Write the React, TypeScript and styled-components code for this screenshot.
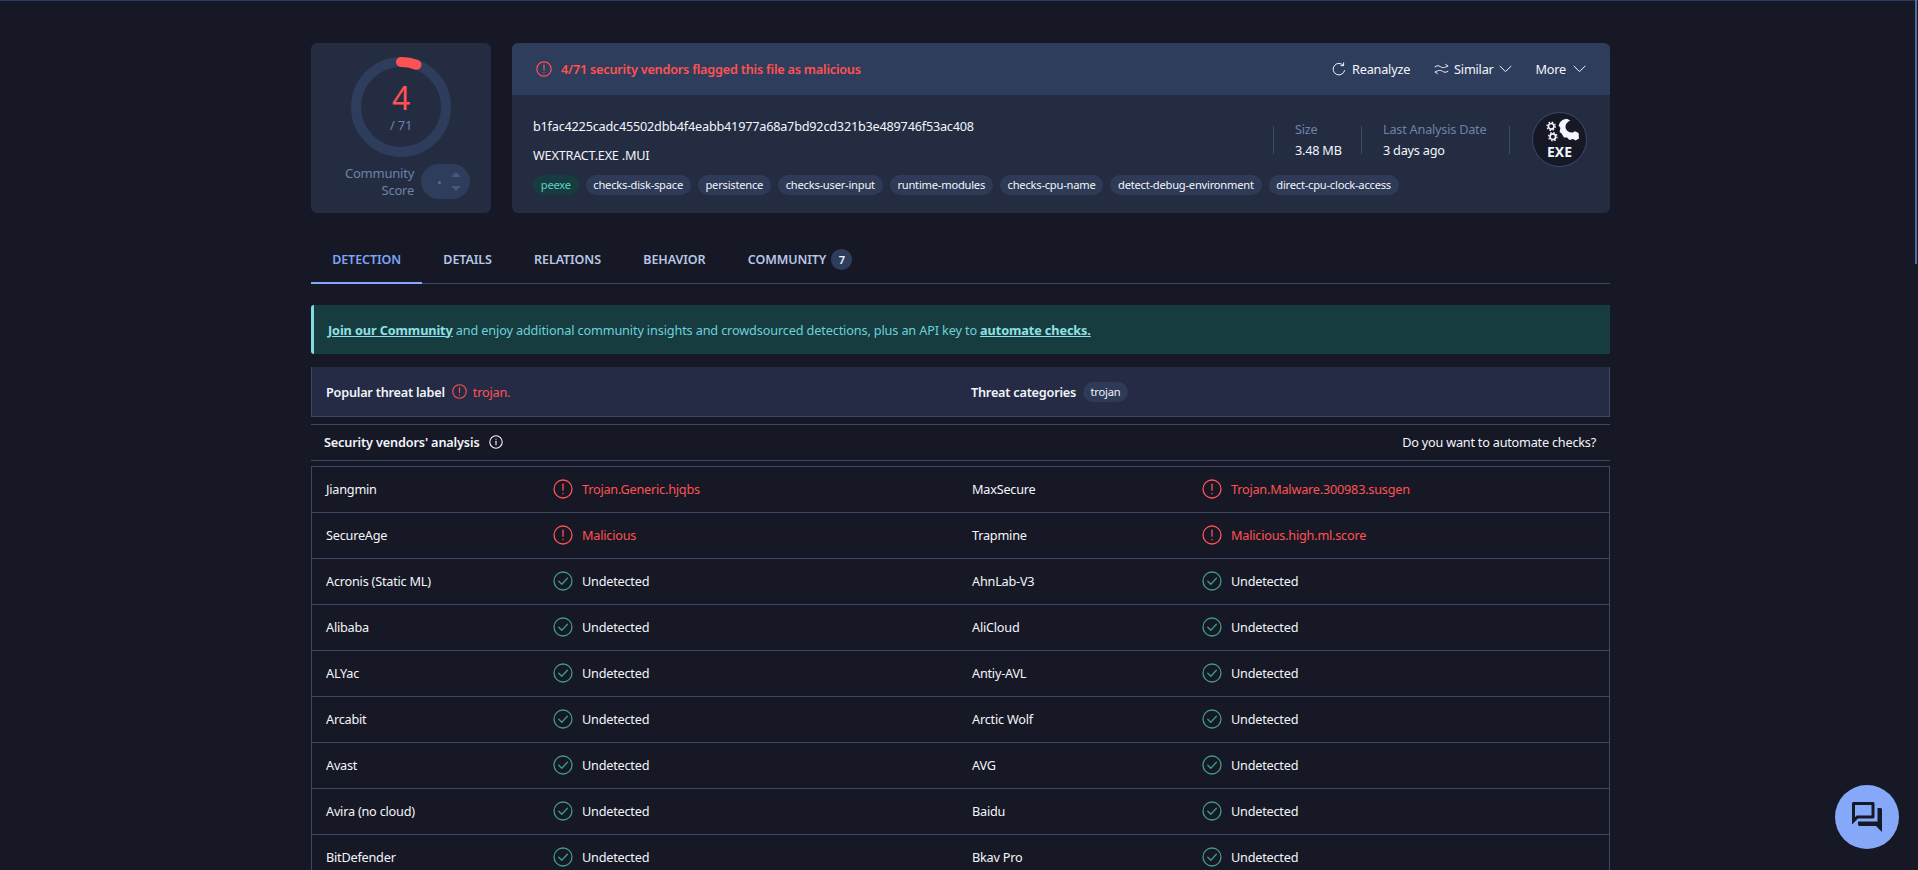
import styled, { createGlobalStyle } from 'styled-components';
import { MdOutlineForum } from 'react-icons/md';

const GlobalStyle = createGlobalStyle`
  html, body {
    margin: 0;
    height: 100%;
    overflow: hidden;
    background: #171825;
  }

  body {
    font-family: "Noto Sans", "Liberation Sans", sans-serif;
    font-size: 12.7px;
    letter-spacing: -0.22px;
    color: #f2f5fb;
  }

  * {
    box-sizing: border-box;
  }
`;

const Page = styled.div`
  border-top: 1px solid #2a3a5f;
  padding: 42px 0 0 311px;
  width: 1918px;
  height: 870px;
  overflow: hidden;
`;

const Container = styled.div`
  width: 1299px;
`;

const Summary = styled.section`
  display: flex;
  gap: 21px;
  height: 170px;
`;

const ScoreCard = styled.div`
  width: 180px;
  background: #242c42;
  border-radius: 6px;
  padding-top: 14px;
  display: flex;
  flex-direction: column;
  align-items: center;
`;

const Gauge = styled.div`
  position: relative;
  width: 100px;
  height: 100px;
`;

const GaugeText = styled.div`
  position: absolute;
  inset: 0;
  display: flex;
  flex-direction: column;
  align-items: center;
  padding-top: 23px;
`;

const GaugeValue = styled.span`
  font-size: 32px;
  line-height: 36px;
  color: #ff5252;
`;

const GaugeTotal = styled.span`
  font-size: 13px;
  line-height: 18px;
  color: #6d82aa;
`;

const CommunityRow = styled.div`
  display: flex;
  align-items: center;
  gap: 7px;
  margin-top: 7px;
  padding-left: 13px;
`;

const CommunityLabel = styled.div`
  text-align: right;
  color: #6d82aa;
  font-size: 13px;
  line-height: 17px;
`;

const VotePill = styled.div`
  position: relative;
  width: 49px;
  height: 35px;
  border-radius: 18px;
  background: #2e3d5c;
`;

const VoteDot = styled.span`
  position: absolute;
  left: 17px;
  top: 17px;
  width: 3px;
  height: 3px;
  border-radius: 50%;
  background: #5d6d8d;
`;

const VoteArrow = styled.span<{ $down?: boolean }>`
  position: absolute;
  left: 30px;
  top: ${(p) => (p.$down ? '22px' : '8px')};
  border-left: 5.5px solid transparent;
  border-right: 5.5px solid transparent;
  ${(p) => (p.$down ? 'border-top' : 'border-bottom')}: 5.5px solid #46567a;
`;

const FileCard = styled.div`
  flex: 1;
  background: #242c42;
  border-radius: 6px;
  overflow: hidden;
`;

const FileHeader = styled.div`
  height: 52px;
  background: #2f3d5c;
  padding: 0 24px 0 24px;
  display: flex;
  align-items: center;
  justify-content: space-between;
`;

const Verdict = styled.div`
  display: flex;
  align-items: center;
  gap: 9px;
  color: #ff5252;
  font-weight: 600;
`;

const Actions = styled.div`
  display: flex;
  align-items: center;
`;

const Action = styled.div<{ $gap: number; $left: number }>`
  display: flex;
  align-items: center;
  gap: ${(p) => p.$gap}px;
  margin-left: ${(p) => p.$left}px;
  color: #f2f5fb;
`;

const FileBody = styled.div`
  padding: 22px 23px 0 21px;
`;

const FileTop = styled.div`
  display: flex;
  justify-content: space-between;
`;

const FileInfo = styled.div`
  display: flex;
  flex-direction: column;
`;

const Hash = styled.div`
  line-height: 18px;
`;

const FileName = styled.div`
  line-height: 18px;
  margin-top: 11px;
`;

const Tags = styled.div`
  display: flex;
  gap: 7px;
  margin-top: 8px;
`;

const Tag = styled.span<{ $green?: boolean }>`
  height: 20px;
  padding: 0 7.75px;
  border-radius: 10px;
  font-size: 11.15px;
  line-height: 20px;
  white-space: nowrap;
  background: ${(p) => (p.$green ? '#163c3f' : '#2e3a56')};
  color: ${(p) => (p.$green ? '#5fd0c8' : '#f2f5fb')};
`;

const Stats = styled.div`
  display: flex;
  align-items: flex-start;
`;

const Stat = styled.div<{ $width: number }>`
  width: ${(p) => p.$width}px;
  height: 28px;
  margin-top: 9px;
  padding-left: 21px;
  border-left: 1px solid #3a4a6b;
  display: flex;
  flex-direction: column;
  justify-content: space-between;
`;

const StatLabel = styled.span`
  color: #6d82aa;
  line-height: 14px;
  margin-top: -4px;
  white-space: nowrap;
`;

const StatValue = styled.span`
  line-height: 14px;
  margin-bottom: -3px;
  white-space: nowrap;
`;

const StatEnd = styled.div`
  width: 1px;
  height: 28px;
  margin: 9px 22px 0 0;
  background: #3a4a6b;
`;

const FileIcon = styled.div`
  width: 55px;
  height: 55px;
  margin-top: -5px;
  border-radius: 50%;
  border: 1px solid #3a4a6b;
  background: #171825;
  display: flex;
  flex-direction: column;
  align-items: center;
  padding-top: 5px;
`;

const FileIconLabel = styled.span`
  font-size: 14px;
  font-weight: 700;
  line-height: 15px;
  letter-spacing: 0;
  color: #f2f5fb;
`;

const Tabs = styled.nav`
  display: flex;
  height: 54px;
  margin-top: 17px;
  border-bottom: 1px solid #3a4766;
`;

const TabItem = styled.div<{ $active?: boolean }>`
  position: relative;
  display: flex;
  align-items: center;
  gap: 5px;
  padding: 6px 21.2px 0;
  font-size: 12.5px;
  font-weight: 600;
  letter-spacing: -0.1px;
  color: ${(p) => (p.$active ? '#7fa4f5' : '#b6c6e6')};

  ${(p) =>
    p.$active &&
    `
    &::after {
      content: '';
      position: absolute;
      left: 0;
      right: 0;
      bottom: -1px;
      height: 2px;
      background: #86a8f8;
    }
  `}
`;

const TabCount = styled.span`
  width: 21px;
  height: 21px;
  border-radius: 50%;
  background: #2e3d5c;
  color: #f2f5fb;
  font-size: 11px;
  line-height: 21px;
  text-align: center;
`;

const Banner = styled.div`
  height: 49px;
  margin-top: 21px;
  padding-left: 14px;
  background: #163c3f;
  border-left: 3px solid #7fdde0;
  border-radius: 3px 0 0 3px;
  color: #6fd0dc;
  letter-spacing: -0.14px;
  display: flex;
  align-items: center;
  white-space: pre;
`;

const BannerLink = styled.a`
  font-weight: 700;
  letter-spacing: -0.1px;
  color: #8fe0e6;
  text-decoration: underline;
`;

const ThreatRow = styled.div`
  height: 50px;
  margin-top: 13px;
  background: #252b45;
  border: 1px solid #3a4766;
  border-top: 0;
  display: flex;
  align-items: center;
  padding-left: 14px;
`;

const ThreatCell = styled.div<{ $width?: number }>`
  display: flex;
  align-items: center;
  width: ${(p) => (p.$width ? `${p.$width}px` : 'auto')};
`;

const ThreatLabel = styled.span`
  font-weight: 600;
  margin-right: 7px;
`;

const ThreatValue = styled.span`
  color: #ff5252;
  margin-left: 6px;
`;

const CategoryPill = styled.span`
  height: 20px;
  padding: 0 7.5px;
  border-radius: 10px;
  font-size: 11.15px;
  line-height: 20px;
  background: #2e3a56;
`;

const AnalysisBar = styled.div`
  height: 37px;
  margin-top: 7px;
  padding: 0 14px 2px 13px;
  border-top: 1px solid #3a4766;
  border-bottom: 1px solid #3a4766;
  display: flex;
  align-items: center;
  justify-content: space-between;
`;

const AnalysisTitle = styled.div`
  display: flex;
  align-items: center;
  gap: 9px;
  font-weight: 600;
  letter-spacing: -0.15px;
`;

const VendorTable = styled.div`
  margin-top: 5px;
  border: 1px solid #3a4766;
  border-bottom: 0;
`;

const VendorRow = styled.div`
  display: grid;
  grid-template-columns: 227px 419px 230px 1fr;
  height: 46px;
  align-items: center;
  padding: 0 0 2px 14px;
  border-bottom: 1px solid #3a4766;
`;

const VendorName = styled.span`
  color: #f2f5fb;
`;

const VendorResult = styled.div<{ $bad?: boolean }>`
  display: flex;
  align-items: center;
  gap: 9px;
  color: ${(p) => (p.$bad ? '#ff5252' : '#f2f5fb')};
`;

const ChatButton = styled.button`
  position: fixed;
  left: 1835px;
  top: 785px;
  width: 64px;
  height: 64px;
  border: 0;
  padding: 0;
  border-radius: 50%;
  background: #86a8f8;
  color: #171825;
  display: flex;
  align-items: center;
  justify-content: center;
`;

const ScrollThumb = styled.div`
  position: fixed;
  top: 0;
  left: 1915px;
  width: 2px;
  height: 264px;
  background: #5a6a9c;
`;

function AlertIcon({ size = 16, stroke = 1.4 }: { size?: number; stroke?: number }) {
  return (
    <svg width={size} height={size} viewBox="0 0 20 20" fill="none" stroke="#ff5252" strokeWidth={stroke * (20 / size)} strokeLinecap="round">
      <circle cx="10" cy="10" r="9" />
      <path d="M10 5.2v6" />
      <path d="M10 14.4v.3" />
    </svg>
  );
}

function CheckIcon() {
  return (
    <svg width="20" height="20" viewBox="0 0 20 20" fill="none" stroke="#3f9a8a" strokeWidth="1.3" strokeLinecap="round" strokeLinejoin="round">
      <circle cx="10" cy="10" r="9" />
      <path d="M5.8 10.2l3 3 5.6-6" />
    </svg>
  );
}

function InfoIcon() {
  return (
    <svg width="14" height="14" viewBox="0 0 14 14" fill="none" stroke="#f2f5fb" strokeWidth="1.1" strokeLinecap="round">
      <circle cx="7" cy="7" r="6.2" />
      <path d="M7 6.2v3.6" />
      <path d="M7 4.1v.2" />
    </svg>
  );
}

function ReanalyzeIcon() {
  return (
    <svg width="14" height="14" viewBox="0 0 14 14" fill="none" stroke="#f2f5fb" strokeWidth="1" strokeLinecap="round" strokeLinejoin="round">
      <path d="M11.4 3.4A5.8 5.8 0 1 0 12.6 8.6" />
      <path d="M11.6 0.8v2.8H8.9" />
    </svg>
  );
}

function SimilarIcon() {
  return (
    <svg width="15" height="12" viewBox="0 0 15 12" fill="none" stroke="#f2f5fb" strokeWidth="1" strokeLinecap="round" strokeLinejoin="round">
      <path d="M1 3.8c2.4-1.8 4-1 5.6 0s3.6 1.4 7.2-.8" />
      <path d="M11.6 1.4l2.2 1.6" />
      <path d="M14 8.2c-2.4 1.8-4 1-5.6 0s-3.6-1.4-7.2.8" />
      <path d="M3.4 10.6L1.2 9" />
    </svg>
  );
}

function Chevron() {
  return (
    <svg width="13" height="8" viewBox="0 0 13 8" fill="none" stroke="#f2f5fb" strokeWidth="1" strokeLinecap="round" strokeLinejoin="round">
      <path d="M1 1.2l5.5 5.4L12 1.2" />
    </svg>
  );
}

function ExeGlyph() {
  return (
    <svg width="36" height="26" viewBox="0 0 36 26" fill="none" overflow="visible">
      <circle cx="9.2" cy="8.3" r="2.8" stroke="#f2f5fb" strokeWidth="1.7" />
      <circle cx="9.2" cy="8.3" r="4.2" stroke="#f2f5fb" strokeWidth="1.2" strokeDasharray="1.6 1.7" />
      <circle cx="10.8" cy="18.7" r="2.8" stroke="#f2f5fb" strokeWidth="1.7" />
      <circle cx="10.8" cy="18.7" r="4.2" stroke="#f2f5fb" strokeWidth="1.2" strokeDasharray="1.6 1.7" />
      <path
        d="M20.8 1.7L24.8.8l3.6 1.8C24.6 4 22.6 7.6 24 11c1.6 3.6 6.4 4.6 9 2.2l3.6 1.8.4 5.6-3.5 2-2.5-1.6-3.6 1-2.4-2.4-3-.2-2.4-4-2-1.4.8-4-1.8-2.4 1.4-3.4z"
        fill="#f2f5fb"
      />
    </svg>
  );
}

const tags = [
  'checks-disk-space',
  'persistence',
  'checks-user-input',
  'runtime-modules',
  'checks-cpu-name',
  'detect-debug-environment',
  'direct-cpu-clock-access',
];

const tabs = ['Detection', 'Details', 'Relations', 'Behavior'];

type Vendor = { name: string; result: string; bad?: boolean };

const ok = 'Undetected';

const vendors: [Vendor, Vendor][] = [
  [
    { name: 'Jiangmin', result: 'Trojan.Generic.hjqbs', bad: true },
    { name: 'MaxSecure', result: 'Trojan.Malware.300983.susgen', bad: true },
  ],
  [
    { name: 'SecureAge', result: 'Malicious', bad: true },
    { name: 'Trapmine', result: 'Malicious.high.ml.score', bad: true },
  ],
  [{ name: 'Acronis (Static ML)', result: ok }, { name: 'AhnLab-V3', result: ok }],
  [{ name: 'Alibaba', result: ok }, { name: 'AliCloud', result: ok }],
  [{ name: 'ALYac', result: ok }, { name: 'Antiy-AVL', result: ok }],
  [{ name: 'Arcabit', result: ok }, { name: 'Arctic Wolf', result: ok }],
  [{ name: 'Avast', result: ok }, { name: 'AVG', result: ok }],
  [{ name: 'Avira (no cloud)', result: ok }, { name: 'Baidu', result: ok }],
  [{ name: 'BitDefender', result: ok }, { name: 'Bkav Pro', result: ok }],
];

function Result({ vendor }: { vendor: Vendor }) {
  return (
    <VendorResult $bad={vendor.bad}>
      {vendor.bad ? <AlertIcon size={20} stroke={1.3} /> : <CheckIcon />}
      <span>{vendor.result}</span>
    </VendorResult>
  );
}

export default function App() {
  return (
    <Page>
      <GlobalStyle />
      <Container>
        <Summary>
          <ScoreCard>
            <Gauge>
              <svg width="100" height="100" viewBox="0 0 100 100" fill="none" strokeWidth="10">
                <circle cx="50" cy="50" r="45" stroke="#2e3d5c" />
                <path d="M50 5A45 45 0 0 1 65.4 7.7" stroke="#ff5252" strokeLinecap="round" />
              </svg>
              <GaugeText>
                <GaugeValue>4</GaugeValue>
                <GaugeTotal>/ 71</GaugeTotal>
              </GaugeText>
            </Gauge>
            <CommunityRow>
              <CommunityLabel>
                Community
                <br />
                Score
              </CommunityLabel>
              <VotePill>
                <VoteDot />
                <VoteArrow />
                <VoteArrow $down />
              </VotePill>
            </CommunityRow>
          </ScoreCard>

          <FileCard>
            <FileHeader>
              <Verdict>
                <AlertIcon size={16} stroke={1.2} />
                4/71 security vendors flagged this file as malicious
              </Verdict>
              <Actions>
                <Action $gap={6} $left={0}>
                  <ReanalyzeIcon />
                  Reanalyze
                </Action>
                <Action $gap={5} $left={24}>
                  <SimilarIcon />
                  Similar
                  <Chevron />
                </Action>
                <Action $gap={7} $left={24}>
                  More
                  <Chevron />
                </Action>
              </Actions>
            </FileHeader>
            <FileBody>
              <FileTop>
                <FileInfo>
                  <Hash>b1fac4225cadc45502dbb4f4eabb41977a68a7bd92cd321b3e489746f53ac408</Hash>
                  <FileName>WEXTRACT.EXE .MUI</FileName>
                </FileInfo>
                <Stats>
                  <Stat $width={88}>
                    <StatLabel>Size</StatLabel>
                    <StatValue>3.48 MB</StatValue>
                  </Stat>
                  <Stat $width={148}>
                    <StatLabel>Last Analysis Date</StatLabel>
                    <StatValue>3 days ago</StatValue>
                  </Stat>
                  <StatEnd />
                  <FileIcon>
                    <ExeGlyph />
                    <FileIconLabel>EXE</FileIconLabel>
                  </FileIcon>
                </Stats>
              </FileTop>
              <Tags>
                <Tag $green>peexe</Tag>
                {tags.map((t) => (
                  <Tag key={t}>{t}</Tag>
                ))}
              </Tags>
            </FileBody>
          </FileCard>
        </Summary>

        <Tabs>
          {tabs.map((t, i) => (
            <TabItem key={t} $active={i === 0}>
              {t.toUpperCase()}
            </TabItem>
          ))}
          <TabItem>
            COMMUNITY
            <TabCount>7</TabCount>
          </TabItem>
        </Tabs>

        <Banner>
          <BannerLink>Join our Community</BannerLink>
          {' and enjoy additional community insights and crowdsourced detections, plus an API key to '}
          <BannerLink>automate checks.</BannerLink>
        </Banner>

        <ThreatRow>
          <ThreatCell $width={645}>
            <ThreatLabel>Popular threat label</ThreatLabel>
            <AlertIcon size={15} stroke={1.1} />
            <ThreatValue>trojan.</ThreatValue>
          </ThreatCell>
          <ThreatCell>
            <ThreatLabel>Threat categories</ThreatLabel>
            <CategoryPill>trojan</CategoryPill>
          </ThreatCell>
        </ThreatRow>

        <AnalysisBar>
          <AnalysisTitle>
            Security vendors' analysis
            <InfoIcon />
          </AnalysisTitle>
          <span>Do you want to automate checks?</span>
        </AnalysisBar>

        <VendorTable>
          {vendors.map(([left, right]) => (
            <VendorRow key={left.name}>
              <VendorName>{left.name}</VendorName>
              <Result vendor={left} />
              <VendorName>{right.name}</VendorName>
              <Result vendor={right} />
            </VendorRow>
          ))}
        </VendorTable>
      </Container>
      <ChatButton aria-label="Chat">
        <MdOutlineForum size={36} />
      </ChatButton>
      <ScrollThumb />
    </Page>
  );
}
